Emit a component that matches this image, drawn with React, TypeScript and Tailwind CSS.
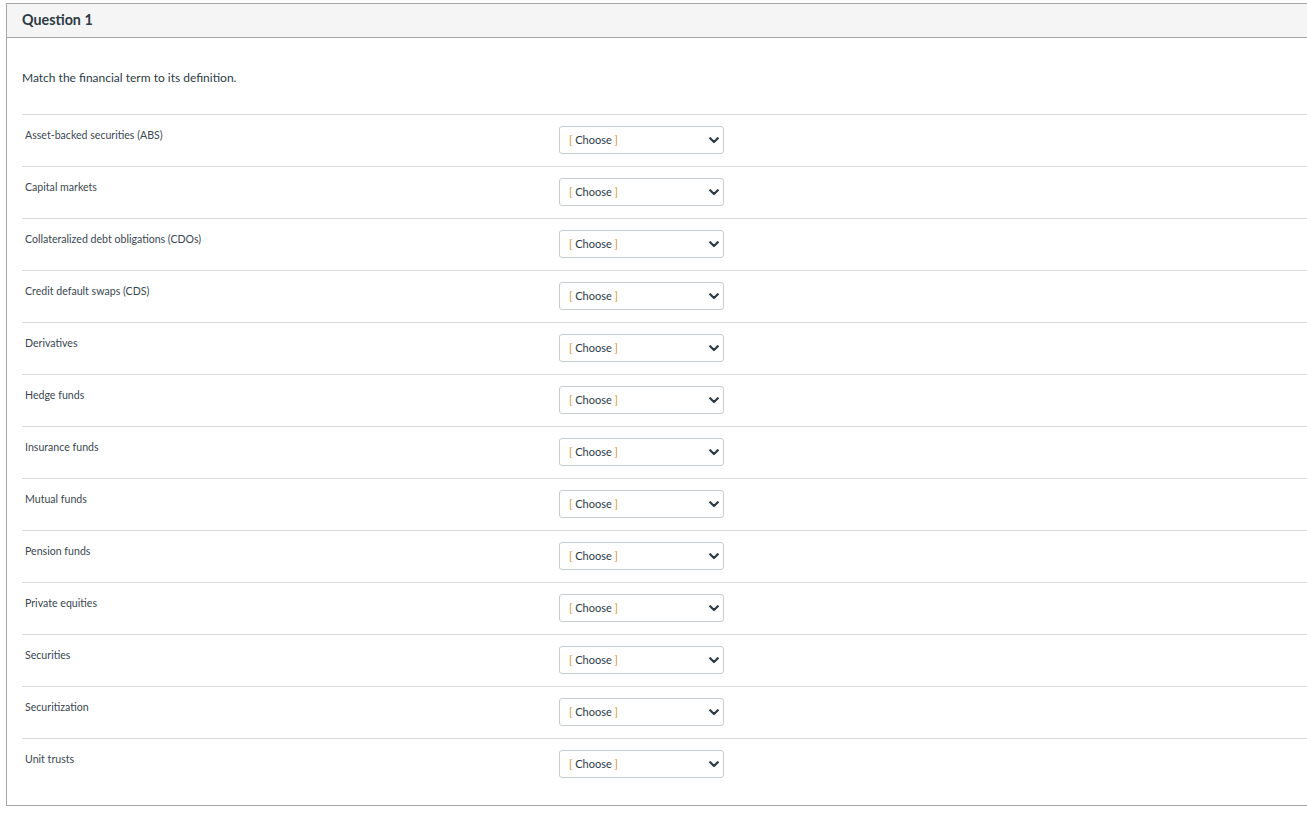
import React from "react";

const terms = [
  "Asset-backed securities (ABS)",
  "Capital markets",
  "Collateralized debt obligations (CDOs)",
  "Credit default swaps (CDS)",
  "Derivatives",
  "Hedge funds",
  "Insurance funds",
  "Mutual funds",
  "Pension funds",
  "Private equities",
  "Securities",
  "Securitization",
  "Unit trusts",
];

function Chevron() {
  return (
    <svg width="10" height="7" viewBox="0 0 10 7" className="block">
      <path d="M1.2 1.2 L5 5 L8.8 1.2" fill="none" stroke="#2d3b45" strokeWidth="2.2" strokeLinecap="round" strokeLinejoin="round" />
    </svg>
  );
}

function Select() {
  return (
    <div className="flex h-[28px] w-[165px] items-center justify-between rounded-[3px] border border-[#c7cdd1] bg-white pl-[9px] pr-[4px] text-[11px]">
      <span>
        <span className="text-[#d4952c]">[</span>
        <span className="text-[#2d3b45]"> Choose </span>
        <span className="text-[#d4952c]">]</span>
      </span>
      <Chevron />
    </div>
  );
}

export default function App() {
  return (
    <div className="min-h-[815px] overflow-hidden bg-white pt-[3px] pl-[6px]" style={{ fontFamily: "Lato, 'Noto Sans', sans-serif" }}>
      <div className="border-y border-l border-[#a6a6a6] text-[#2d3b45]">
        <div className="flex h-[34px] items-center border-b border-[#a6a6a6] bg-[#f5f5f5] pl-[15px]">
          <span className="mt-[-1px] text-[14.3px] font-bold text-[#2d3b45]">Question 1</span>
        </div>
        <div className="pl-[15px] pb-[15px]">
          <div className="pt-[31px] pb-[27px] text-[12px]">Match the financial term to its definition.</div>
          {terms.map((t) => (
            <div key={t} className="flex h-[52px] border-t border-[#dcdcdc]">
              <div className="w-[537px] pl-[3px] pt-[13px] text-[10.6px] text-[#3a4750]">{t}</div>
              <div className="pt-[11px]">
                <Select />
              </div>
            </div>
          ))}
        </div>
      </div>
    </div>
  );
}
